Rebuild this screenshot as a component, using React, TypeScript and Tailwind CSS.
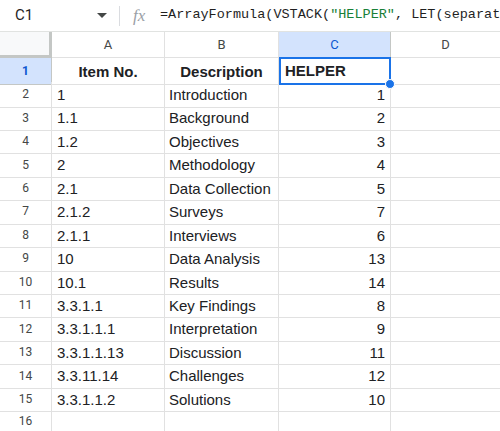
import React from "react";

const rows: [string, string, string][] = [
  ["1", "Introduction", "1"],
  ["1.1", "Background", "2"],
  ["1.2", "Objectives", "3"],
  ["2", "Methodology", "4"],
  ["2.1", "Data Collection", "5"],
  ["2.1.2", "Surveys", "7"],
  ["2.1.1", "Interviews", "6"],
  ["10", "Data Analysis", "13"],
  ["10.1", "Results", "14"],
  ["3.3.1.1", "Key Findings", "8"],
  ["3.3.1.1.1", "Interpretation", "9"],
  ["3.3.1.1.13", "Discussion", "11"],
  ["3.3.11.14", "Challenges", "12"],
  ["3.3.1.1.2", "Solutions", "10"],
  ["", "", ""],
];

const cols = "grid grid-cols-[52px_113px_114px_112px_1fr]";

export default function App() {
  return (
    <div className="w-[500px] h-[431px] overflow-hidden bg-white font-['Liberation_Sans',Arial,sans-serif] text-[#202124]">
      {/* Formula bar */}
      <div className="h-[32px] flex items-center border-b border-[#e1e3e1] whitespace-nowrap overflow-hidden">
        <div className="shrink-0 w-[97px] pl-[15px] text-[15px] text-[#1f1f1f] font-['Roboto',sans-serif]">C1</div>
        <svg width="10" height="6" viewBox="0 0 10 6" className="shrink-0 mt-[1px]">
          <path d="M0 0 L10 0 L5 5 Z" fill="#444746" />
        </svg>
        <div className="shrink-0 ml-[12px] w-px h-[20px] bg-[#dadce0]" />
        <span className="shrink-0 ml-[13px] w-[20px] text-[17px] italic text-[#9aa0a6] font-['Liberation_Serif',serif]">fx</span>
        <span className="shrink-0 ml-[7px] text-[13.5px] font-['Liberation_Mono',monospace] text-[#1f1f1f]">
          =ArrayFormula(VSTACK(<span className="text-[#188038]">"HELPER"</span>, LET(separators
        </span>
      </div>

      {/* Column headers */}
      <div className={`${cols} h-[26px] text-[13px] text-[#444746] font-['Roboto',sans-serif]`}>
        <div className="bg-[#f8f9fa] border-r-[3px] border-b-[3px] border-[#c4c7c5]" />
        <div className="flex items-center justify-center border-r border-b border-[#e1e1e1]">A</div>
        <div className="flex items-center justify-center border-r border-b border-[#e1e1e1]">B</div>
        <div className="flex items-center justify-center bg-[#d3e3fd] border-r border-b border-[#c4c7c5] text-[#0b57d0]">C</div>
        <div className="flex items-center justify-center border-b border-[#e1e1e1]">D</div>
      </div>

      {/* Row 1 */}
      <div className={`${cols} h-[24px] text-[15px]`}>
        <div className="flex items-center justify-center bg-[#d3e3fd] border-r border-b border-[#c4c7c5] text-[12px] font-bold text-[#0b57d0] font-['Roboto',sans-serif]">1</div>
        <div className="flex items-center justify-center pt-[2px] font-bold border-r border-b border-[#e1e1e1]">Item No.</div>
        <div className="flex items-center justify-center pt-[2px] font-bold border-r border-b border-[#e1e1e1]">Description</div>
        <div className="relative flex items-center pl-[4px] pt-[1px] font-bold border-2 border-[#1a73e8] -mt-px">
          HELPER
          <div className="absolute -right-[6px] -bottom-[6px] w-[10px] h-[10px] rounded-full bg-[#1a73e8] border border-white" />
        </div>
        <div className="border-b border-[#e1e1e1]" />
      </div>

      {/* Data rows */}
      {rows.map((r, i) => (
        <div key={i} className={`${cols} h-[23.45px] text-[15px]`}>
          <div className="flex items-center justify-center border-r border-b border-[#e1e1e1] text-[12px] text-[#444746] font-['Roboto',sans-serif]">
            {i + 2}
          </div>
          <div className="flex items-center pl-[5px] pt-[2px] border-r border-b border-[#e1e1e1]">{r[0]}</div>
          <div className="flex items-center pl-[4px] pt-[2px] border-r border-b border-[#e1e1e1]">{r[1]}</div>
          <div className="flex items-center justify-end pr-[5px] pt-[2px] border-r border-b border-[#e1e1e1]">{r[2]}</div>
          <div className="border-b border-[#e1e1e1]" />
        </div>
      ))}
    </div>
  );
}
